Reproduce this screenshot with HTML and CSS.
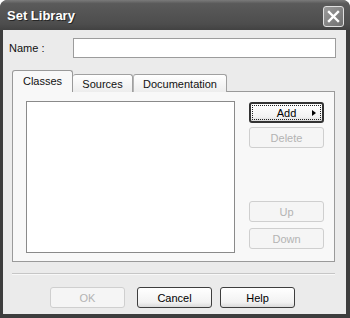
FILE: index.html
```html
<!DOCTYPE html>
<html lang="en">
<head>
    <meta charset="UTF-8">
    <title>Set Library</title>
    <link rel="stylesheet" href="styles.css">
</head>
<body>
    <div class="window">
        <div class="titlebar">
            <span class="title">Set Library</span>
            <span class="close">
                <svg width="13" height="13" viewBox="0 0 13 13">
                    <path d="M2 2 L11 11 M11 2 L2 11" stroke="#fff" stroke-width="2.4" stroke-linecap="square"/>
                </svg>
            </span>
        </div>
        <div class="client">
            <div class="name-row">
                <label for="libName">Name :</label>
                <input type="text" id="libName" class="name-input">
            </div>
            <div class="tabs">
                <div class="tab active">Classes</div>
                <div class="tab tab-sources">Sources</div>
                <div class="tab tab-doc">Documentation</div>
            </div>
            <div class="panel">
                <div class="listbox"></div>
                <div class="side">
                    <button class="btn btn-add">Add<span class="arrow"></span></button>
                    <button class="btn btn-delete" disabled>Delete</button>
                    <div class="spacer"></div>
                    <button class="btn" disabled>Up</button>
                    <button class="btn btn-down" disabled>Down</button>
                </div>
            </div>
            <div class="separator"></div>
            <div class="footer">
                <button class="btn btn-ok" disabled>OK</button>
                <button class="btn btn-cancel">Cancel</button>
                <button class="btn btn-help">Help</button>
            </div>
        </div>
    </div>
</body>
</html>
```

FILE: styles.css
```css
/* styles.css */
body, html {
    margin: 0;
    padding: 0;
    background-color: #ffffff;
    font-family: 'Liberation Sans', Arial, sans-serif;
}
.window {
    width: 350px;
    height: 318px;
    box-sizing: border-box;
    background-color: #3d3d3d;
    border-radius: 8px 8px 0 0;
    padding: 0 4px 4px 3px;
    display: flex;
    flex-direction: column;
}
.titlebar {
    flex: none;
    height: 30px;
    margin: 0 -4px 0 -3px;
    padding-left: 7px;
    display: flex;
    align-items: center;
    border-radius: 7px 7px 0 0;
    background: linear-gradient(#7a7a7a, #5a5a5a 12%, #4d4d4d 80%, #424242);
}
.title {
    color: #ffffff;
    font-weight: bold;
    font-size: 13px;
    text-shadow: 1px 1px 0 #262626;
    padding-top: 1px;
}
.close {
    margin-left: auto;
    margin-right: 6px;
    margin-top: 2px;
    width: 21px;
    height: 21px;
    box-sizing: border-box;
    border: 1px solid #e0e0e0;
    border-radius: 3px;
    background: linear-gradient(135deg, #9a9a9a, #707070);
    display: flex;
    align-items: center;
    justify-content: center;
}
.client {
    flex: 1;
    background-color: #ebebeb;
    padding: 0 11px 0 9px;
    display: flex;
    flex-direction: column;
    font-size: 11px;
}
.name-row {
    margin-top: 8px;
    margin-left: -3px;
    margin-right: -1px;
    height: 20px;
    display: flex;
    align-items: center;
}
.name-row label {
    width: 64px;
    color: #111;
}
.name-input {
    flex: 1;
    height: 20px;
    box-sizing: border-box;
    border: 1px solid #9c9c9c;
    background-color: #ffffff;
    margin: 0;
    padding: 0 3px;
}
.tabs {
    margin-top: 12px;
    height: 22px;
    margin-bottom: -1px;
    display: flex;
    align-items: flex-end;
    position: relative;
    z-index: 1;
}
.tab {
    height: 18px;
    box-sizing: border-box;
    border: 1px solid #a0a0a0;
    border-bottom: none;
    border-radius: 3px 3px 0 0;
    background: linear-gradient(#ffffff, #ededed);
    display: flex;
    align-items: center;
    justify-content: center;
    color: #111;
    padding-top: 1px;
}
.tab.active {
    width: 61px;
    height: 22px;
    background: #f8f8f8;
    border-color: #999;
    padding-bottom: 2px;
}
.tab-sources {
    width: 60px;
    border-left: none;
}
.tab-doc {
    width: 94px;
    border-left: 1px solid #b5b5b5;
}
.panel {
    height: 171px;
    box-sizing: border-box;
    border: 1px solid #9a9a9a;
    background-color: #f8f8f8;
    padding: 9px 10px 8px 13px;
    display: flex;
}
.listbox {
    width: 209px;
    height: 152px;
    box-sizing: border-box;
    border: 1px solid #8a8a8a;
    background-color: #ffffff;
}
.side {
    margin-left: 14px;
    width: 75px;
    height: 152px;
    display: flex;
    flex-direction: column;
}
.spacer {
    flex: 1;
}
.btn {
    width: 75px;
    height: 21px;
    box-sizing: border-box;
    padding: 0;
    margin: 0;
    font-family: 'Liberation Sans', Arial, sans-serif;
    font-size: 11px;
    color: #000;
    border: 1px solid #3e3e3e;
    border-radius: 3px;
    background: linear-gradient(#ffffff, #f2f2f2 75%, #dadada);
    position: relative;
}
.btn:disabled {
    color: #b3b3b3;
    border-color: #cfcfcf;
    background: #f5f5f5;
}
.btn-add {
    margin-top: 1px;
    outline: 1px dotted #222;
    outline-offset: -4px;
    border-width: 2px;
    border-color: #333;
}
.arrow {
    position: absolute;
    right: 6px;
    top: 6px;
    width: 0;
    height: 0;
    border-top: 3px solid transparent;
    border-bottom: 3px solid transparent;
    border-left: 4px solid #000;
}
.btn-delete {
    margin-top: 4px;
}
.btn-down {
    margin-top: 6px;
    margin-bottom: 4px;
}
.separator {
    margin-top: 11px;
    height: 1px;
    background-color: #c6c6c6;
    border-bottom: 1px solid #f8f8f8;
}
.footer {
    margin-top: 12px;
    display: flex;
}
.btn-ok {
    margin-left: 38px;
}
.btn-cancel {
    margin-left: 12px;
}
.btn-help {
    margin-left: 8px;
}
```
